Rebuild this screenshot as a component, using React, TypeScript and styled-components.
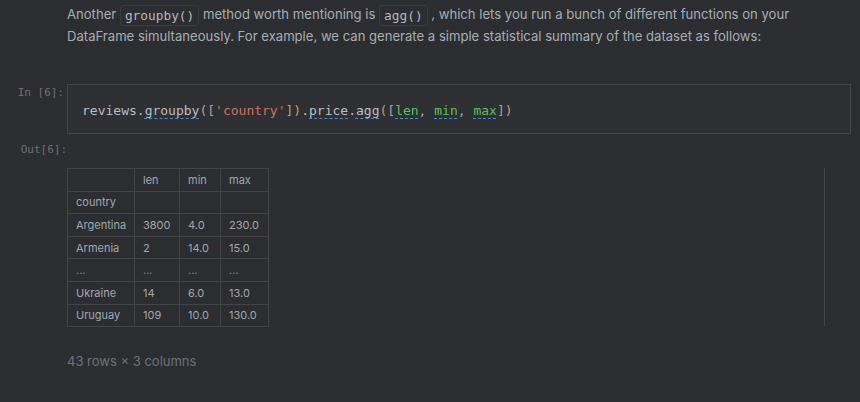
import React from "react";
import styled, { createGlobalStyle } from "styled-components";

const GlobalStyle = createGlobalStyle`
  html, body {
    margin: 0;
    padding: 0;
    background: #2b2d30;
  }
`;

type Tok = { t: string; k?: "str" | "fn" | "call" | "punc" | "paren" };

const codeTokens: Tok[] = [
  { t: "reviews." },
  { t: "groupby", k: "call" },
  { t: "(", k: "paren" },
  { t: "[", k: "punc" },
  { t: "'country'", k: "str" },
  { t: "]", k: "punc" },
  { t: ")", k: "paren" },
  { t: "." },
  { t: "price", k: "call" },
  { t: "." },
  { t: "agg", k: "call" },
  { t: "(", k: "paren" },
  { t: "[", k: "punc" },
  { t: "len", k: "fn" },
  { t: ", ", k: "punc" },
  { t: "min", k: "fn" },
  { t: ", ", k: "punc" },
  { t: "max", k: "fn" },
  { t: "]", k: "punc" },
  { t: ")", k: "paren" },
];

const rows = [
  ["Argentina", "3800", "4.0", "230.0"],
  ["Armenia", "2", "14.0", "15.0"],
  ["...", "...", "...", "..."],
  ["Ukraine", "14", "6.0", "13.0"],
  ["Uruguay", "109", "10.0", "130.0"],
];

const App: React.FC = () => {
  return (
    <Page>
      <GlobalStyle />
      <Markdown>
        Another <InlineCode>groupby()</InlineCode> method worth mentioning is{" "}
        <InlineCode>agg()</InlineCode> , which lets you run a bunch of different functions on your
        DataFrame simultaneously. For example, we can generate a simple statistical summary of the
        dataset as follows:
      </Markdown>

      <CodeCell>
        <Prompt>In [6]:</Prompt>
        <CodeBox>
          {codeTokens.map((tok, i) => (
            <Token key={i} kind={tok.k}>
              {tok.t}
            </Token>
          ))}
        </CodeBox>
      </CodeCell>

      <OutCell>
        <Prompt out>Out[6]:</Prompt>
      </OutCell>

      <OutputArea>
        <Frame>
          <colgroup>
            <col style={{ width: 67 }} />
            <col style={{ width: 45 }} />
            <col style={{ width: 41 }} />
            <col style={{ width: 48 }} />
          </colgroup>
          <thead>
            <tr>
              <Th />
              <Th>len</Th>
              <Th>min</Th>
              <Th>max</Th>
            </tr>
            <tr>
              <Th>country</Th>
              <Th />
              <Th />
              <Th />
            </tr>
          </thead>
          <tbody>
            {rows.map((r) => (
              <tr key={r[0] + r[1]}>
                {r.map((c, j) => (
                  <Td key={j} dim={c === "..."}>
                    {c}
                  </Td>
                ))}
              </tr>
            ))}
          </tbody>
        </Frame>
      </OutputArea>

      <Summary>43 rows × 3 columns</Summary>
    </Page>
  );
};

export default App;

/* Styled Components */
const Page = styled.div`
  width: 860px;
  height: 402px;
  overflow: hidden;
  background: #2b2d30;
  font-family: Inter, "Noto Sans", sans-serif;
`;

const Markdown = styled.p`
  margin: 0;
  padding: 4px 40px 0 67px;
  font-size: 13.1px;
  line-height: 21px;
  color: #a8adb4;
`;

const InlineCode = styled.code`
  display: inline-block;
  font-family: "DejaVu Sans Mono", monospace;
  font-size: 12.8px;
  line-height: 19px;
  color: #b3b8be;
  border: 1px solid #393b3f;
  border-radius: 3px;
  padding: 0 4px;
  vertical-align: -1px;
`;

const CodeCell = styled.div`
  display: flex;
  align-items: flex-start;
  margin-top: 37px;
  padding-right: 9px;
`;

const Prompt = styled.div<{ out?: boolean }>`
  width: 67px;
  flex-shrink: 0;
  box-sizing: border-box;
  padding-right: ${({ out }) => (out ? "0" : "3px")};
  padding-top: 2px;
  text-align: right;
  font-family: "DejaVu Sans Mono", monospace;
  font-size: 11px;
  line-height: 14px;
  color: #6b6f75;
`;

const CodeBox = styled.div`
  flex: 1;
  height: 50px;
  box-sizing: border-box;
  display: flex;
  align-items: center;
  padding: 2px 14px 0;
  border: 1px solid #434549;
  background: #2d2f32;
  font-family: "DejaVu Sans Mono", monospace;
  font-size: 13px;
  white-space: pre;
  color: #bcbec4;
`;

const tokenColors: Record<string, string> = {
  str: "#d0705f",
  fn: "#5cc05f",
  call: "#bcbec4",
  punc: "#a0a4aa",
  paren: "#c6a072",
};

const Token = styled.span<{ kind?: string }>`
  color: ${({ kind }) => (kind ? tokenColors[kind] : "#bcbec4")};
  ${({ kind }) =>
    kind === "call" || kind === "fn"
      ? `text-decoration: underline dashed #4a8cc7; text-underline-offset: 3px; text-decoration-thickness: 1px;`
      : ""}
`;

const OutCell = styled.div`
  display: flex;
  margin-top: 7px;
`;

const OutputArea = styled.div`
  margin: 11px 35px 0 67px;
  border-right: 1px solid #45474b;
  height: 158px;
`;

const Frame = styled.table`
  border-collapse: collapse;
  table-layout: fixed;
  width: 202px;
  font-size: 11px;
  color: #a2a7ae;
`;

const Th = styled.th`
  height: 21.6px;
  padding: 0 0 0 8px;
  text-align: left;
  font-weight: 400;
  border: 1px solid #424448;
  white-space: nowrap;
`;

const Td = styled.td<{ dim?: boolean }>`
  height: 21.6px;
  padding: 0 0 0 8px;
  border: 1px solid #424448;
  white-space: nowrap;
  color: ${({ dim }) => (dim ? "#7d8288" : "#a2a7ae")};
`;

const Summary = styled.div`
  margin: 27px 0 0 67px;
  font-size: 13px;
  color: #6e7278;
`;
